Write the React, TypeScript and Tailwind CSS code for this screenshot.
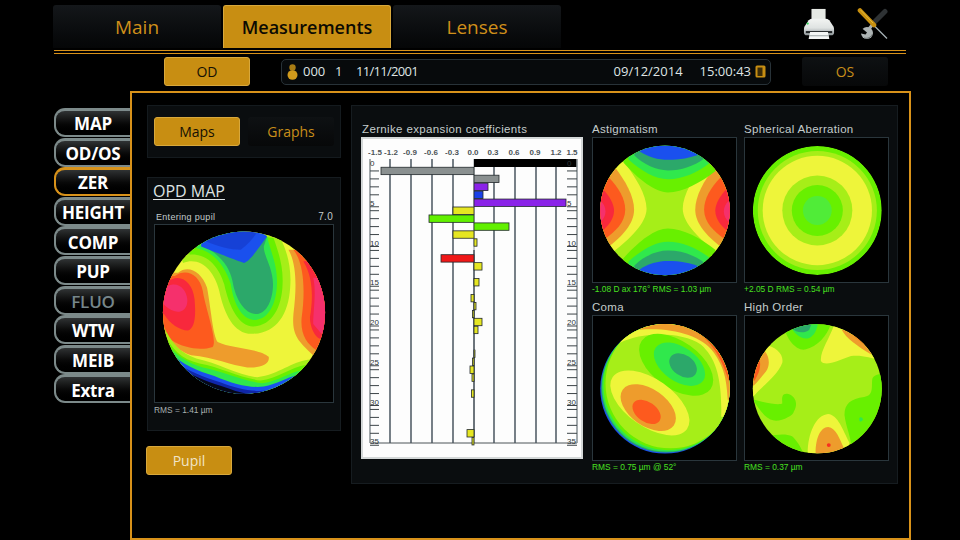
import type { ReactNode } from "react";

const PINK = "#f5306c";
const RED = "#f8283c";
const HOT = "#fd5a1e";
const ORANGE = "#ee9c2c";
const YELLOW = "#eef53a";
const LIME = "#a6ee18";
const GREEN = "#68f000";
const MINT = "#30e84c";
const TEAL = "#2ca86a";
const BLUE = "#1a50ee";
const NAVY = "#1026a8";

const tabs = ["Main", "Measurements", "Lenses"];
const sideTabs = ["MAP", "OD/OS", "ZER", "HEIGHT", "COMP", "PUP", "FLUO", "WTW", "MEIB", "Extra"];

// [row, from, to, colour], x values in page pixels
const bars: [number, number, number, string][] = [
  [1, 381, 474, "#8a9090"],
  [2, 474, 499, "#8a9090"],
  [3, 474, 488, "#8a22e8"],
  [4, 474, 483, "#1a40e8"],
  [5, 474, 566, "#8a22e8"],
  [6, 453, 474, "#e6e622"],
  [7, 429, 474, "#62f000"],
  [8, 474, 509, "#62f000"],
  [9, 453, 474, "#e6e622"],
  [10, 474, 477, "#e6e622"],
  [12, 441, 474, "#f01818"],
  [13, 474, 482, "#e6e622"],
  [15, 474, 479, "#e6e622"],
  [17, 471, 474, "#e6e622"],
  [18, 474, 476, "#e6e622"],
  [19, 472.5, 474, "#e6e622"],
  [20, 474, 482, "#e6e622"],
  [21, 474, 478, "#e6e622"],
  [24, 474, 475, "#e6e622"],
  [25, 472.5, 474, "#e6e622"],
  [26, 470, 474, "#e6e622"],
  [27, 472, 474, "#e6e622"],
  [29, 471.5, 474, "#e6e622"],
  [34, 467, 474, "#e6e622"],
  [35, 472, 474, "#e6e622"],
];

const topLabels: [number, string][] = [
  [375, "-1.5"],
  [391, "-1.2"],
  [410, "-0.9"],
  [431, "-0.6"],
  [452, "-0.3"],
  [473, "0.0"],
  [493, "0.3"],
  [514, "0.6"],
  [535, "0.9"],
  [556, "1.2"],
  [572, "1.5"],
];

const rowY = (n: number) => 163 + n * 7.95;

function ZernikeChart() {
  const rows = Array.from({ length: 36 }, (_, i) => i);
  return (
    <svg viewBox="361 137 222 322" className="block w-[222px] h-[322px]">
      <rect x="361" y="137" width="222" height="322" fill="#d4d8d8" />
      <rect x="363" y="139" width="218" height="318" fill="#fdfdfd" />
      {[390, 411, 432, 453, 494, 515, 536, 556].map((x) => (
        <line key={x} x1={x} x2={x} y1="159" y2="443" stroke="#68727a" strokeWidth="1.8" />
      ))}
      <line x1="474" x2="474" y1="159" y2="443" stroke="#8c9498" strokeWidth="1" />
      <line x1="370" x2="577" y1="443" y2="443" stroke="#4c5458" strokeWidth="1" />
      <rect x="474" y="159" width="103" height="8" fill="#000" />
      <line x1="370" x2="370" y1="159" y2="443" stroke="#8c9498" strokeWidth="1.6" />
      <line x1="577" x2="577" y1="159" y2="443" stroke="#8c9498" strokeWidth="1.6" />
      {rows.slice(1).map((n) => (
        <g key={n} stroke="#3c4448" strokeWidth="1">
          <line x1="370" x2="379" y1={rowY(n) + (n % 5 === 0 ? 4 : 0)} y2={rowY(n) + (n % 5 === 0 ? 4 : 0)} />
          <line x1="567" x2="577" y1={rowY(n) + (n % 5 === 0 ? 4 : 0)} y2={rowY(n) + (n % 5 === 0 ? 4 : 0)} />
        </g>
      ))}
      {rows
        .filter((n) => n % 5 === 0)
        .map((n) => (
          <g key={n} fontFamily="Liberation Sans, sans-serif" fontSize="8" fill="#2c3438">
            <text x="370" y={rowY(n) + 3}>{n}</text>
            <text x="567" y={rowY(n) + 3}>{n}</text>
          </g>
        ))}
      <line x1="474" x2="474" y1="250" y2="437" stroke="#14202c" strokeWidth="1" />
      {bars.map(([n, from, to, color]) => (
        <rect key={n} x={from} y={rowY(n) - 3.7} width={to - from} height="7.4" fill={color} stroke="#22282c" strokeWidth="0.8" />
      ))}
      {topLabels.map(([x, label]) => (
        <text key={label} x={x} y="155" textAnchor="middle" fontFamily="Liberation Sans, sans-serif" fontSize="8" fontWeight="700" fill="#4c5458">
          {label}
        </text>
      ))}
    </svg>
  );
}

function MapFrame({ id, view, cx, cy, r, className, children }: { id: string; view: string; cx: number; cy: number; r: number; className: string; children: ReactNode }) {
  return (
    <div className={`border border-[#2a363c] bg-black ${className}`}>
      <svg viewBox={view} className="block w-full h-full">
        <defs>
          <clipPath id={id}>
            <circle cx={cx} cy={cy} r={r} />
          </clipPath>
        </defs>
        <g clipPath={`url(#${id})`}>{children}</g>
      </svg>
    </div>
  );
}

function OpdMap() {
  return (
    <MapFrame id="opd" view="10 10 540 537" cx={280} cy={276} r={246} className="w-[180px] h-[179px]">
      <rect x="0" y="0" width="560" height="560" fill={YELLOW} />
      {/* hot zone left */}
      <path fill={ORANGE} d="M80 155C110 130 150 150 168 200C182 280 185 340 200 365C240 385 330 385 355 410C360 435 320 445 290 442C240 435 190 412 120 405C90 398 60 370 40 340L0 340L0 155Z" />
      <path fill={HOT} d="M70 165C105 140 145 160 155 210C165 270 200 360 185 380C150 392 100 385 60 360L30 320L0 320L0 165Z" />
      <path fill={RED} d="M60 175C95 160 125 190 130 235C135 290 130 325 110 330C85 330 55 310 37 280L0 280L0 175Z" />
      <path fill={PINK} d="M50 195C80 180 105 205 108 235C110 265 90 278 70 272C55 268 45 260 35 250L0 250L0 195Z" />
      {/* hot zone right */}
      <path fill={ORANGE} d="M415 85C440 130 440 200 430 280C425 340 440 360 490 405L560 405L560 85Z" />
      <path fill={HOT} d="M430 85C465 130 465 220 455 290C450 340 470 370 500 390L560 390L560 85Z" />
      <path fill={RED} d="M460 120C490 170 490 230 480 290C480 320 495 350 510 355L560 355L560 120Z" />
      <path fill={PINK} d="M490 170C500 210 490 270 490 310L515 340L560 340L560 170Z" />
      {/* bottom rim */}
      <path fill={LIME} d="M35 315C60 370 90 400 135 415C200 428 260 465 320 472C390 462 420 425 480 418L560 418L560 600L0 600L0 315Z" />
      <path fill={GREEN} d="M38 340C60 385 90 418 145 430C210 442 270 474 330 482C380 476 420 442 470 434L560 434L560 600L0 600L0 340Z" />
      <path fill={MINT} d="M45 368C70 402 105 428 155 442C220 455 280 484 335 490C385 484 420 456 460 450L560 450L560 600L0 600L0 368Z" />
      <path fill={BLUE} d="M55 392C90 435 140 452 190 468C250 494 300 505 340 500C380 492 410 472 445 464L560 464L560 600L0 600L0 392Z" />
      <path fill={NAVY} d="M75 425C110 455 160 472 210 488C260 508 310 517 350 512C385 502 400 492 420 482L560 482L560 600L0 600L0 425Z" />
      <path fill="#060818" d="M105 455C150 480 200 495 240 508C270 520 310 527 340 522L560 600L0 600Z" />
      {/* low zone top */}
      <path fill={LIME} d="M95 125C150 105 190 150 205 210C220 280 250 345 310 340C380 335 415 280 420 200C425 140 410 90 395 60L400 0L50 0Z" />
      <path fill={GREEN} d="M115 100C170 95 205 140 220 190C235 260 265 320 310 318C365 315 395 260 397 190C400 130 380 80 370 50L100 0Z" />
      <path fill={MINT} d="M135 80C190 90 225 140 240 190C250 260 280 300 315 298C355 295 378 250 380 190C382 130 360 90 350 45L130 0Z" />
      <path fill={TEAL} d="M150 70C200 95 235 130 245 180C255 240 285 282 320 280C350 278 368 235 368 190C368 140 340 105 340 75L350 45L150 0Z" />
      <path fill={BLUE} d="M150 75C200 95 250 115 280 125C300 120 330 70 350 45L300 0L150 0Z" />
      <path fill={NAVY} d="M165 60C200 75 240 85 270 85C290 70 310 50 320 30L170 20Z" opacity="0.35" />
    </MapFrame>
  );
}

function AstigmatismMap() {
  const side = (
    <>
      <path fill={YELLOW} d="M118 122C150 170 185 220 185 265C185 310 130 360 85 395L0 395L0 122Z" />
      <path fill={ORANGE} d="M90 140C120 180 147 225 147 268C147 310 110 350 72 378L0 378L0 140Z" />
      <path fill={HOT} d="M70 170C100 200 120 235 120 268C120 305 90 335 60 355L0 355L0 170Z" />
      <path fill={RED} d="M52 205C72 225 86 250 86 270C86 295 70 315 50 332L0 332L0 205Z" />
      <path fill={PINK} d="M45 240C55 250 60 260 60 272C60 285 55 295 45 305L0 305L0 240Z" />
    </>
  );
  const cap = (
    <>
      <path fill={GREEN} d="M115 125C160 175 210 215 250 215C295 215 350 185 395 150L400 0L100 0Z" />
      <path fill={MINT} d="M130 115C170 150 210 175 250 175C295 175 340 155 378 125L380 0L120 0Z" />
      <path fill={TEAL} d="M148 103C175 130 215 148 250 148C290 148 330 135 362 110L360 0L140 0Z" />
      <path fill={BLUE} d="M163 90C190 108 220 116 250 116C285 116 320 110 347 98L345 0L160 0Z" />
    </>
  );
  return (
    <MapFrame id="astig" view="22 50 435 437" cx={241} cy={270} r={197} className="w-[145px] h-[146px]">
      <rect x="0" y="0" width="480" height="540" fill={LIME} />
      {side}
      <g transform="translate(480 0) scale(-1 1)">{side}</g>
      {cap}
      <g transform="translate(0 540) scale(1 -1)">{cap}</g>
    </MapFrame>
  );
}

function SphericalMap() {
  const rings: [number, string][] = [
    [197, GREEN],
    [182, LIME],
    [167, YELLOW],
    [107, LIME],
    [78, GREEN],
    [44, "#50ec38"],
  ];
  return (
    <MapFrame id="sph" view="476 50 437 437" cx={697} cy={270} r={197} className="w-[145px] h-[146px]">
      {rings.map(([r, color]) => (
        <circle key={r} cx="697" cy="270" r={r} fill={color} />
      ))}
    </MapFrame>
  );
}

function ComaMap() {
  const rot = "rotate(35 ";
  return (
    <MapFrame id="coma" view="22 45 435 435" cx={241} cy={265} r={197} className="w-[145px] h-[146px]">
      <rect x="0" y="0" width="480" height="500" fill={BLUE} />
      <circle cx="244" cy="262" r="197" fill={TEAL} />
      <circle cx="247" cy="259" r="197" fill={MINT} />
      <circle cx="251" cy="255" r="197" fill={GREEN} />
      <circle cx="257" cy="249" r="197" fill={LIME} />
      <path fill={YELLOW} d="M105 125C170 92 290 90 350 130C395 170 415 230 412 350L480 350L480 0L100 0Z" />
      <path fill={ORANGE} d="M165 85C260 78 350 100 390 155C420 200 428 230 432 300L500 300L500 0L165 0Z" />
      <path fill={HOT} d="M280 72C350 85 400 130 435 240L500 240L500 0L280 0Z" />
      <ellipse cx="275" cy="192" rx="128" ry="72" fill={GREEN} transform={`${rot}275 192)`} />
      <ellipse cx="285" cy="190" rx="88" ry="52" fill={MINT} transform={`${rot}285 190)`} />
      <ellipse cx="296" cy="194" rx="46" ry="32" fill={TEAL} transform={`${rot}296 194)`} />
      <ellipse cx="195" cy="308" rx="138" ry="72" fill={YELLOW} transform={`${rot}195 308)`} />
      <ellipse cx="190" cy="322" rx="95" ry="56" fill={ORANGE} transform={`${rot}190 322)`} />
      <ellipse cx="185" cy="335" rx="48" ry="30" fill={HOT} transform={`${rot}185 335)`} />
    </MapFrame>
  );
}

function HighOrderMap() {
  return (
    <MapFrame id="high" view="476 45 437 435" cx={697} cy={265} r={197} className="w-[145px] h-[146px]">
      <rect x="476" y="45" width="437" height="435" fill={LIME} />
      <path fill={GREEN} d="M590 60C600 110 630 150 660 145C700 135 730 100 740 60Z" />
      <path fill={MINT} d="M610 60C620 95 650 118 672 110C690 100 695 85 700 60Z" />
      <path fill={TEAL} d="M618 78C630 92 655 98 672 85L682 60L618 60Z" />
      <path fill={YELLOW} d="M748 70C735 110 705 150 708 180C720 198 760 180 800 165C830 160 860 170 900 180L900 70Z" />
      <path fill={ORANGE} d="M772 85C785 110 820 135 862 160L900 120L880 70Z" />
      <path fill={HOT} d="M790 85C810 105 840 130 870 155L900 110L860 70Z" />
      <path fill={YELLOW} d="M538 132C570 135 595 160 590 185C575 225 530 255 500 290L480 290L480 132Z" />
      <path fill={ORANGE} d="M538 152C552 170 552 195 540 212C525 230 515 245 503 255L480 255L480 152Z" />
      <path fill={HOT} d="M520 175C526 195 520 215 505 240L480 240L480 175Z" />
      <path fill={GREEN} d="M900 215C885 222 868 222 865 235C862 260 870 285 840 290C800 295 780 310 780 345C785 385 800 410 800 440L900 440Z" />
      <path fill={MINT} d="M825 355C828 350 835 352 836 358C836 364 829 367 826 363Z" />
      <path fill={GREEN} d="M495 295C520 320 530 355 565 362C590 365 625 345 625 335C640 310 630 285 605 280C585 278 590 300 590 310C580 315 540 310 495 295Z" />
      <path fill={GREEN} d="M545 410C570 405 600 400 620 410C635 425 650 445 660 480L500 480Z" />
      <path fill={YELLOW} d="M668 470C665 410 690 345 730 342C760 345 775 390 795 430L790 480Z" />
      <path fill={ORANGE} d="M692 470C690 420 705 383 730 382C755 385 765 420 778 445L770 480Z" />
      <circle cx="732" cy="437" r="6" fill="#f83020" />
    </MapFrame>
  );
}

function PrinterIcon() {
  return (
    <svg width="32" height="32" viewBox="0 0 34 34">
      <defs>
        <linearGradient id="printerBody" x1="0" y1="0" x2="0" y2="1">
          <stop offset="0" stopColor="#f2f4f2" />
          <stop offset="0.55" stopColor="#dfe3e2" />
          <stop offset="1" stopColor="#8e9699" />
        </linearGradient>
      </defs>
      <path d="M9 1h15v13H9z" fill="#e6e9e4" />
      <path d="M6 13 Q8 11.5 10 11.5H24Q26 11.5 28 13L32.5 20Q33 21 33 23V26Q33 29 30 29H4Q1 29 1 26V23Q1 21 1.5 20Z" fill="url(#printerBody)" />
      <rect x="3" y="24.5" width="28" height="2.2" fill="#222628" />
      <path d="M7.5 25.5H26.5L28 33H6Z" fill="#f4f6f5" />
      <rect x="7" y="29" width="20" height="1" fill="#9aa2a4" />
      <circle cx="5" cy="16.5" r="1.2" fill="#38d860" />
    </svg>
  );
}

function ToolsIcon() {
  return (
    <svg width="32" height="32" viewBox="0 0 32 32">
      {/* wrench */}
      <line x1="28" y1="3.5" x2="17" y2="14.5" stroke="#2e3234" strokeWidth="5" strokeLinecap="round" />
      <line x1="17" y1="14.5" x2="12" y2="21" stroke="#a8aeae" strokeWidth="3" />
      <circle cx="10" cy="25" r="6" fill="#aeb4b4" />
      <path d="M2 18L10 24.5L8.5 26.5L2 25Z" fill="#000" />
      <path d="M7 30C10.5 31 14 29.5 15.5 26" fill="none" stroke="#6c7272" strokeWidth="1" />
      {/* screwdriver */}
      <line x1="16.5" y1="17" x2="30" y2="30.5" stroke="#a8b4b8" strokeWidth="1.2" />
      <line x1="3" y1="2.5" x2="17" y2="17" stroke="#c8900f" strokeWidth="4.6" strokeLinecap="round" />
      <line x1="3.6" y1="2" x2="16" y2="15" stroke="#e8bc3a" strokeWidth="1" />
    </svg>
  );
}

function SmallCaption({ children, green }: { children: ReactNode; green?: boolean }) {
  return <div className={`font-['Liberation_Sans',sans-serif] text-[8.4px] leading-[11px] ${green ? "text-[#48e020]" : "text-[#a8b0b0]"}`}>{children}</div>;
}

function MapCell({ title, caption, children }: { title: string; caption: string; children: ReactNode }) {
  return (
    <div className="w-[145px]">
      <div className="h-[15px] font-['Liberation_Sans',sans-serif] text-[11.5px] leading-[15px] tracking-[0.3px] text-[#c4cccc]">{title}</div>
      {children}
      <div className="mt-[1px] h-[12px]">
        <SmallCaption green>{caption}</SmallCaption>
      </div>
    </div>
  );
}

function GoldButton({ label, active, light }: { label: string; active?: boolean; light?: boolean }) {
  return (
    <button
      className={`w-[86px] h-[29px] rounded-[3px] font-['Open_Sans',sans-serif] text-[14px] ${
        active
          ? `bg-[#c88e12] border border-[#d8a83c] ${light ? "text-[#f0e4c8]" : "text-[#141004] font-medium"}`
          : "bg-gradient-to-b from-[#0e1113] to-[#070809] text-[#c88e1a]"
      }`}
    >
      {label}
    </button>
  );
}

export default function App() {
  return (
    <div className="w-[960px] h-[540px] overflow-hidden bg-black pt-[5px] flex flex-col">
      {/* top tabs */}
      <div className="flex h-[43px] ml-[53px] w-[853px] gap-[2px]">
        {tabs.map((t) => (
          <div
            key={t}
            className={`w-[168px] rounded-t-[3px] flex items-center justify-center pt-[1px] font-['Open_Sans',sans-serif] ${
              t === "Measurements"
                ? "bg-[#c88e12] border border-[#d8a83c] border-b-0 text-[#0c0a02] font-semibold text-[18px]"
                : "bg-gradient-to-b from-[#14171a] to-[#050607] text-[#d0901a] text-[19px]"
            }`}
          >
            {t}
          </div>
        ))}
        <div className="ml-auto mr-[17px] flex items-center gap-[22px] pb-[6px]">
          <PrinterIcon />
          <ToolsIcon />
        </div>
      </div>
      <div className="ml-[54px] w-[852px] mt-[2px] h-[4px] border-t border-b border-[#d8921a]" />

      {/* OD / patient / OS */}
      <div className="flex items-center h-[29px] mt-[3px] pl-[164px]">
        <GoldButton label="OD" active />
        <div className="ml-[31px] w-[490px] h-[26px] rounded-[5px] border border-[#283238] bg-[#070a0c] flex items-center pl-[5px] pr-[4px] font-['Open_Sans',sans-serif] text-[13px] text-[#dfe4e4]">
          <svg width="11" height="16" viewBox="0 0 11 16" className="mr-[5px]">
            <circle cx="5.5" cy="3.5" r="3.2" fill="#a87c14" />
            <ellipse cx="5.5" cy="11" rx="5" ry="4.8" fill="#d09a1c" />
          </svg>
          <span className="w-[32px]">000</span>
          <span className="w-[21px]">1</span>
          <span className="tracking-[-0.7px]">11/11/2001</span>
          <span className="ml-auto">09/12/2014</span>
          <span className="ml-[17px]">15:00:43</span>
          <svg width="11" height="13" viewBox="0 0 11 13" className="ml-[4px]">
            <rect x="0.5" y="0.5" width="10" height="12" rx="1.5" fill="#c88e12" />
            <rect x="2.5" y="2.5" width="5" height="8.5" fill="#3c2c08" />
          </svg>
        </div>
        <div className="ml-[31px]">
          <GoldButton label="OS" />
        </div>
      </div>

      <div className="flex mt-[5px] ml-[54px]">
        {/* side tabs */}
        <div className="w-[76px] pt-[17px] flex flex-col gap-[0.6px]">
          {sideTabs.map((s) => (
            <div
              key={s}
              className={`h-[29px] pt-[2px] rounded-l-[11px] border-2 border-t-[3px] border-r-0 bg-gradient-to-b from-[#303334] via-[#0a0a0a] to-black flex items-center justify-center font-['Open_Sans',sans-serif] font-bold text-[17px] tracking-[-0.2px] ${
                s === "ZER" ? "border-[#d8921a]" : "border-[#7c8a8a]"
              } ${s === "FLUO" ? "text-[#76868a] font-semibold" : "text-white"}`}
            >
              {s}
            </div>
          ))}
        </div>

        {/* main frame */}
        <div className="w-[781px] h-[449px] border-2 border-[#d8921a] pl-[15px] pt-[12px] flex">
          <div className="w-[194px]">
            <div className="h-[53px] bg-[#0a0d0f] border border-[#141a1e] flex items-center gap-[8px] pl-[6px]">
              <GoldButton label="Maps" active />
              <GoldButton label="Graphs" />
            </div>
            <div className="mt-[19px] h-[254px] bg-[#0a0d0f] border border-[#161c20] px-[6px] pt-[4px]">
              <div className="-ml-px font-['Open_Sans',sans-serif] text-[16px] leading-[18px] text-[#dfe4e4] underline underline-offset-2">OPD MAP</div>
              <div className="mt-[10px] flex justify-between pr-[1px] pl-[2px] font-['Liberation_Sans',sans-serif] text-[9px] leading-[14px] tracking-[0.3px] text-[#c4cccc]">
                <span>Entering pupil</span>
                <span className="text-[10px]">7.0</span>
              </div>
              <OpdMap />
              <div className="mt-[2px]">
                <SmallCaption>RMS = 1.41 µm</SmallCaption>
              </div>
            </div>
            <div className="mt-[15px] -ml-px">
              <GoldButton label="Pupil" active light />
            </div>
          </div>

          <div className="ml-[10px] w-[547px] h-[379px] bg-[#0a0d0f] border border-[#161c20] pl-[9px] pt-[16px] flex items-start">
            <div className="w-[222px]">
              <div className="h-[15px] pl-px font-['Liberation_Sans',sans-serif] text-[11.5px] leading-[15px] tracking-[0.36px] text-[#c4cccc]">Zernike expansion coefficients</div>
              <ZernikeChart />
            </div>
            <div className="ml-[9px] grid grid-cols-[145px_145px] content-start gap-x-[7px] gap-y-[4px]">
              <MapCell title="Astigmatism" caption="-1.08 D ax 176° RMS = 1.03 µm">
                <AstigmatismMap />
              </MapCell>
              <MapCell title="Spherical Aberration" caption="+2.05 D RMS = 0.54 µm">
                <SphericalMap />
              </MapCell>
              <MapCell title="Coma" caption="RMS = 0.75 µm @ 52°">
                <ComaMap />
              </MapCell>
              <MapCell title="High Order" caption="RMS = 0.37 µm">
                <HighOrderMap />
              </MapCell>
            </div>
          </div>
        </div>
      </div>
    </div>
  );
}
